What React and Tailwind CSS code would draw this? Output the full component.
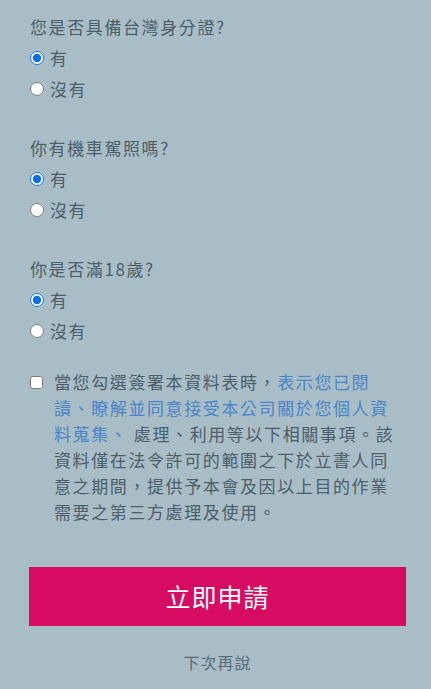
import React, { useState } from 'react';

const questions = [
  { id: 'idcard', label: '您是否具備台灣身分證?' },
  { id: 'license', label: '你有機車駕照嗎?' },
  { id: 'adult', label: '你是否滿18歲?' },
];

const App = () => {
  const [answers, setAnswers] = useState({ idcard: 'yes', license: 'yes', adult: 'yes' });
  const [agreed, setAgreed] = useState(false);

  return (
    <div
      className="min-h-[689px] bg-[#a9bdc6] text-[#4b5e6a] text-[17px] tracking-[1.6px]"
      style={{ fontFamily: '"Noto Sans CJK TC", "Liberation Sans", sans-serif' }}
    >
      <div className="w-[377px] ml-[29px] pt-[11px]">
        <div className="flex flex-col gap-[28px]">
          {questions.map((q) => (
            <div key={q.id}>
              <p className="leading-[31px] pl-[1px]">{q.label}</p>
              {[
                { value: 'yes', text: '有' },
                { value: 'no', text: '沒有' },
              ].map((opt) => (
                <label key={opt.value} className="flex items-center h-[31px] cursor-pointer">
                  <input
                    type="radio"
                    name={q.id}
                    checked={answers[q.id] === opt.value}
                    onChange={() => setAnswers({ ...answers, [q.id]: opt.value })}
                    className="w-[14px] h-[14px] m-0 mr-[6px] ml-[1px] accent-[#0a6fe8]"
                  />
                  <span>{opt.text}</span>
                </label>
              ))}
            </div>
          ))}
        </div>

        <div className="flex items-start mt-[23px]">
          <input
            type="checkbox"
            checked={agreed}
            onChange={() => setAgreed(!agreed)}
            className="w-[13px] h-[13px] mt-[7px] ml-[1px] mr-[11px] shrink-0"
          />
          <p className="leading-[26px] w-[342px]">
            當您勾選簽署本資料表時，
            <span className="text-[#4a84c6]">表示您已閱讀、瞭解並同意接受本公司關於您個人資料蒐集、</span>
            {' '}處理、利用等以下相關事項。該資料僅在法令許可的範圍之下於立書人同意之期間，提供予本會及因以上目的作業需要之第三方處理及使用。
          </p>
        </div>

        <button className="mt-[42px] w-full h-[59px] bg-[#d80b63] text-white text-[25px] tracking-[1px]">
          立即申請
        </button>

        <div className="mt-[24px] text-center leading-[24px] text-[#586c78] text-[16px] tracking-[1px]">
          下次再說
        </div>
      </div>
    </div>
  );
};

export default App;
